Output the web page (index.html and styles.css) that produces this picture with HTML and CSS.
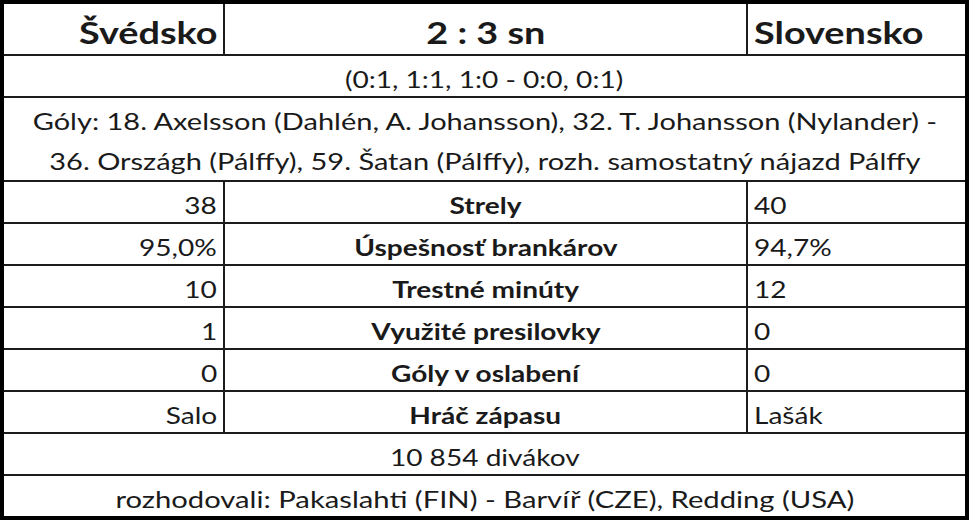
FILE: index.html
```html
<!DOCTYPE html>
<html lang="sk">
<head>
<meta charset="utf-8">
<title>Švédsko - Slovensko</title>
<link rel="stylesheet" href="styles.css">
</head>
<body>
<div class="box">
  <div class="cell head right"><span class="t">Švédsko</span></div>
  <div class="cell head center"><span class="t">2 : 3 sn</span></div>
  <div class="cell head left"><span class="t">Slovensko</span></div>

  <div class="cell full"><span class="t">(0:1, 1:1, 1:0 - 0:0, 0:1)</span></div>
  <div class="cell full goals"><span class="t wide">Góly: 18. Axelsson (Dahlén, A. Johansson), 32. T. Johansson (Nylander) -<br>36. Országh (Pálffy), 59. Šatan (Pálffy), rozh. samostatný nájazd Pálffy</span></div>

  <div class="cell right"><span class="t">38</span></div>
  <div class="cell center bold"><span class="t">Strely</span></div>
  <div class="cell left"><span class="t">40</span></div>

  <div class="cell right"><span class="t">95,0%</span></div>
  <div class="cell center bold"><span class="t">Úspešnosť brankárov</span></div>
  <div class="cell left"><span class="t">94,7%</span></div>

  <div class="cell right"><span class="t">10</span></div>
  <div class="cell center bold"><span class="t">Trestné minúty</span></div>
  <div class="cell left"><span class="t">12</span></div>

  <div class="cell right"><span class="t">1</span></div>
  <div class="cell center bold"><span class="t">Využité presilovky</span></div>
  <div class="cell left"><span class="t">0</span></div>

  <div class="cell right"><span class="t">0</span></div>
  <div class="cell center bold"><span class="t">Góly v oslabení</span></div>
  <div class="cell left"><span class="t">0</span></div>

  <div class="cell right"><span class="t">Salo</span></div>
  <div class="cell center bold"><span class="t">Hráč zápasu</span></div>
  <div class="cell left"><span class="t">Lašák</span></div>

  <div class="cell full"><span class="t">10 854 divákov</span></div>
  <div class="cell full"><span class="t wider">rozhodovali: Pakaslahti (FIN) - Barvíř (CZE), Redding (USA)</span></div>
</div>
</body>
</html>
```
FILE: styles.css
```css
html, body {
  margin: 0;
  padding: 0;
  background: #fff;
}
.box {
  width: 969px;
  height: 520px;
  box-sizing: border-box;
  border: 4px solid #000;
  background: #1c1c1c;
  display: grid;
  grid-template-columns: 219px 521px 217px;
  grid-template-rows: 50px 40px 82px repeat(8, 40px);
  gap: 2px;
  font-family: Lato, "Open Sans", sans-serif;
  font-size: 23px;
  color: #1a1a1a;
}
.cell {
  background: #fff;
  display: flex;
  align-items: flex-end;
  padding: 0 6px 3px;
  line-height: 28px;
  white-space: nowrap;
  overflow: hidden;
}
.t {
  display: inline-block;
  transform: scaleX(1.22);
  transform-origin: center bottom;
}
.t.wide { transform: scaleX(1.26); }
.t.wider { transform: scaleX(1.27); }
.head {
  font-weight: 700;
  font-size: 31px;
  line-height: 38px;
  padding-bottom: 3px;
}
.right { justify-content: flex-end; padding-right: 6px; }
.right .t { transform-origin: right bottom; }
.left { justify-content: flex-start; padding-left: 6px; }
.left .t { transform-origin: left bottom; }
.center { justify-content: center; }
.bold { font-weight: 700; }
.full {
  grid-column: 1 / -1;
  justify-content: center;
  text-align: center;
}
.goals {
  line-height: 40px;
  padding: 3px 0 0;
  align-items: flex-start;
}
```
